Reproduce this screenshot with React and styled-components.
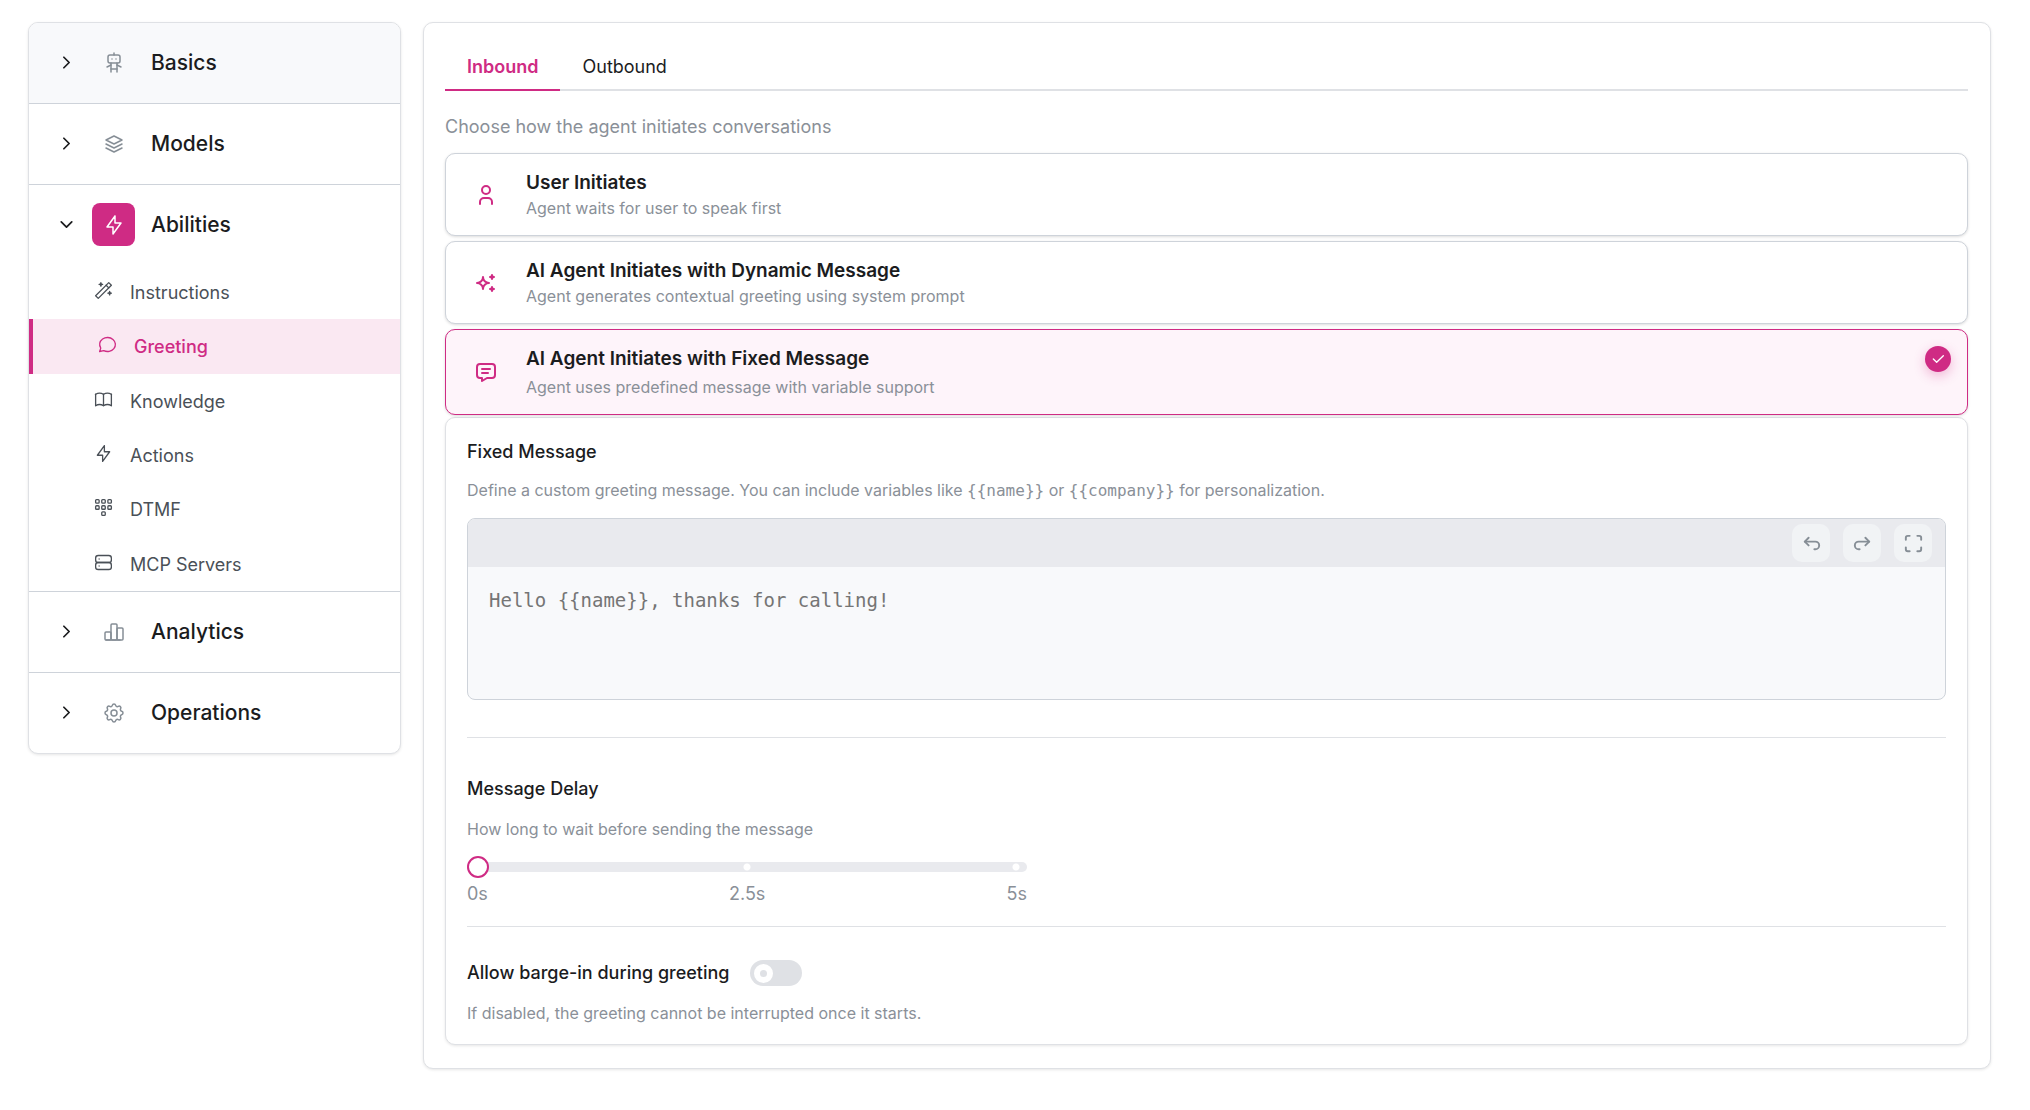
import { useState } from "react";
import styled, { createGlobalStyle, css } from "styled-components";
import {
  TbArrowBackUp,
  TbArrowForwardUp,
  TbBolt,
  TbBook,
  TbChartBar,
  TbCheck,
  TbChevronDown,
  TbChevronRight,
  TbDialpad,
  TbMaximize,
  TbMessage,
  TbMessageCircle,
  TbRobot,
  TbServer,
  TbSettings,
  TbSparkles,
  TbStack2,
  TbUser,
  TbWand,
} from "react-icons/tb";

const GlobalStyle = createGlobalStyle`
  :root {
    --pink: #cf2b84;
    --pink-light: #fae8f2;
    --pink-faint: #fef4fa;
    --text: #1b1c1e;
    --text-soft: #4a5057;
    --text-dim: #8a9098;
    --gray-0: #f8f9fb;
    --gray-1: #f1f3f5;
    --gray-2: #e9eaee;
    --gray-3: #dfe1e5;
    --gray-4: #ced3da;
    --mono: "DejaVu Sans Mono", monospace;
  }

  *, *::before, *::after {
    box-sizing: border-box;
  }

  body {
    margin: 0;
    background: #fff;
    color: var(--text);
    font-family: Inter, "Liberation Sans", sans-serif;
    font-size: 18px;
    -webkit-font-smoothing: antialiased;
  }

  button, input, textarea {
    font: inherit;
    color: inherit;
  }
`;

const Page = styled.div`
  display: flex;
  align-items: flex-start;
  gap: 22px;
  padding: 22px 39px 40px 28px;
`;

const panel = css`
  background: #fff;
  border: 1px solid var(--gray-3);
  border-radius: 10px;
  box-shadow: 0 1px 3px rgba(0, 0, 0, 0.1);
`;

/* ---------- sidebar ---------- */

const Sidebar = styled.nav`
  ${panel}
  flex: 0 0 373px;
  overflow: hidden;
`;

const Section = styled.div`
  & + & {
    border-top: 1px solid var(--gray-4);
  }
`;

const SectionButton = styled.button`
  display: flex;
  align-items: center;
  width: 100%;
  height: 80px;
  padding: 0 27px 1px;
  border: 0;
  background: ${(p) => (p.$hovered ? "var(--gray-0)" : "transparent")};
  font-size: 21px;
  font-weight: 500;
  text-align: left;
  cursor: pointer;
`;

const SectionIcon = styled.span`
  display: grid;
  place-items: center;
  width: 43px;
  height: 43px;
  margin: 0 16px 0 15px;
  border-radius: 8px;
  color: ${(p) => (p.$active ? "#fff" : "#868e96")};
  background: ${(p) => (p.$active ? "var(--pink)" : "transparent")};
`;

const SubList = styled.div`
  display: grid;
  grid-auto-rows: 1fr;
  height: 326px;
`;

const SubLink = styled.a`
  display: flex;
  align-items: center;
  gap: 16px;
  padding: 1px 0 0 64px;
  color: var(--text-soft);
  text-decoration: none;

  svg {
    margin-bottom: 4px;
  }

  ${(p) =>
    p.$active &&
    css`
      border-left: 4px solid var(--pink);
      background: var(--pink-light);
      color: var(--pink);
      font-weight: 500;
    `}
`;

/* ---------- main ---------- */

const Main = styled.main`
  ${panel}
  flex: 1;
  min-width: 0;
  padding: 21px 22px 23px 21px;
`;

const TabList = styled.div`
  display: flex;
  border-bottom: 2px solid var(--gray-3);
`;

const Tab = styled.button`
  height: 47px;
  margin-bottom: -2px;
  padding: 0 22px;
  border: 0;
  border-bottom: 2px solid ${(p) => (p.$active ? "var(--pink)" : "transparent")};
  background: none;
  color: ${(p) => (p.$active ? "var(--pink)" : "inherit")};
  font-weight: ${(p) => (p.$active ? 600 : 400)};
  cursor: pointer;
`;

const Options = styled.fieldset`
  display: flex;
  flex-direction: column;
  gap: 5px;
  margin: 0 0 2px;
  padding: 0;
  border: 0;
`;

const Legend = styled.legend`
  padding: 22px 0 13px;
  line-height: 27px;
  color: var(--text-dim);
`;

const OptionCard = styled.label`
  position: relative;
  display: flex;
  align-items: center;
  gap: 20px;
  padding: 17px 20px 15px;
  border: 1px solid ${(p) => (p.$selected ? "var(--pink)" : "var(--gray-4)")};
  border-radius: 10px;
  background: ${(p) => (p.$selected ? "var(--pink-faint)" : "#fff")};
  box-shadow: 0 1px 3px rgba(0, 0, 0, 0.14);
  cursor: pointer;
`;

const HiddenRadio = styled.input`
  position: absolute;
  opacity: 0;
  pointer-events: none;
`;

const OptionIcon = styled.span`
  display: grid;
  place-items: center;
  width: 40px;
  padding-bottom: 2px;
  color: var(--pink);
`;

const OptionText = styled.span`
  display: flex;
  flex-direction: column;
  gap: ${(p) => (p.$selected ? "5px" : "2px")};
`;

const OptionTitle = styled.span`
  line-height: 24px;
  font-size: 19px;
  font-weight: 600;
`;

const OptionHint = styled.span`
  line-height: 23px;
  font-size: 16px;
  color: var(--text-dim);
`;

const SelectedBadge = styled.span`
  position: absolute;
  top: 16px;
  right: 16px;
  display: grid;
  place-items: center;
  width: 26px;
  height: 26px;
  border-radius: 50%;
  background: var(--pink);
  color: #fff;
  box-shadow: 0 4px 12px rgba(207, 43, 132, 0.3);
`;

const Settings = styled.div`
  ${panel}
  padding: 0 21px;
`;

const Block = styled.section`
  padding: ${(p) => p.$pad};

  & + & {
    border-top: 1px solid var(--gray-3);
  }
`;

const FieldTitle = styled.label`
  display: block;
  line-height: 28px;
  font-weight: 500;
`;

const Hint = styled.p`
  margin: ${(p) => p.$gap || "14px"} 0 0;
  line-height: 24px;
  font-size: 16px;
  color: var(--text-dim);

  code {
    font-family: var(--mono);
    font-size: 16px;
  }
`;

const Editor = styled.div`
  margin-top: 15px;
  border: 1px solid var(--gray-4);
  border-radius: 8px;
  background: var(--gray-0);
  overflow: hidden;
`;

const Toolbar = styled.div`
  display: flex;
  justify-content: flex-end;
  gap: 13px;
  padding: 5px 13px;
  background: var(--gray-2);
`;

const ToolButton = styled.button`
  display: grid;
  place-items: center;
  width: 38px;
  height: 38px;
  padding: 0;
  border: 0;
  border-radius: 10px;
  background: var(--gray-1);
  color: #868e96;
  cursor: pointer;
`;

const MessageInput = styled.textarea`
  display: block;
  width: 100%;
  height: 132px;
  padding: 19px 21px;
  border: 0;
  outline: 0;
  resize: none;
  background: transparent;
  font-family: var(--mono);
  font-size: 19px;
  line-height: 28px;

  &::placeholder {
    color: #757575;
  }
`;

const SliderBox = styled.div`
  max-width: 560px;
  margin-top: 15px;
`;

const Slider = styled.input`
  display: block;
  width: 100%;
  height: 22px;
  margin: 0;
  appearance: none;
  background: none;
  cursor: pointer;

  &::-webkit-slider-runnable-track {
    height: 10px;
    border-radius: 5px;
    background:
      radial-gradient(circle at 50% 50%, #fff 3px, transparent 4px),
      radial-gradient(circle at calc(100% - 11px) 50%, #fff 3px, transparent 4px),
      var(--gray-2);
  }

  &::-webkit-slider-thumb {
    appearance: none;
    width: 22px;
    height: 22px;
    margin-top: -6px;
    border: 2px solid var(--pink);
    border-radius: 50%;
    background: #fff;
  }
`;

const SliderLabels = styled.div`
  display: flex;
  justify-content: space-between;
  margin-top: 3px;
  line-height: 26px;
  color: var(--text-dim);
`;

const SwitchRow = styled.div`
  display: flex;
  align-items: center;
  gap: 20px;
`;

const Switch = styled.input`
  appearance: none;
  display: flex;
  align-items: center;
  width: 52px;
  height: 26px;
  margin: 0;
  padding: 0 4px;
  border-radius: 13px;
  background: ${(p) => (p.checked ? "var(--pink)" : "var(--gray-3)")};
  cursor: pointer;

  &::before {
    content: "";
    width: 19px;
    height: 19px;
    margin-left: ${(p) => (p.checked ? "auto" : 0)};
    border: 6px solid #fff;
    border-radius: 50%;
  }
`;

const sections = [
  { label: "Basics", icon: TbRobot, hovered: true },
  { label: "Models", icon: TbStack2 },
  {
    label: "Abilities",
    icon: TbBolt,
    items: [
      { label: "Instructions", icon: TbWand },
      { label: "Greeting", icon: TbMessageCircle },
      { label: "Knowledge", icon: TbBook },
      { label: "Actions", icon: TbBolt },
      { label: "DTMF", icon: TbDialpad },
      { label: "MCP Servers", icon: TbServer },
    ],
  },
  { label: "Analytics", icon: TbChartBar },
  { label: "Operations", icon: TbSettings },
];

const options = [
  {
    id: "user",
    icon: TbUser,
    title: "User Initiates",
    hint: "Agent waits for user to speak first",
  },
  {
    id: "dynamic",
    icon: TbSparkles,
    title: "AI Agent Initiates with Dynamic Message",
    hint: "Agent generates contextual greeting using system prompt",
  },
  {
    id: "fixed",
    icon: TbMessage,
    title: "AI Agent Initiates with Fixed Message",
    hint: "Agent uses predefined message with variable support",
  },
];

const SideNav = () => (
  <Sidebar>
    {sections.map(({ label, icon: Icon, hovered, items }) => (
      <Section key={label}>
        <SectionButton type="button" $hovered={hovered} aria-expanded={!!items}>
          {items ? <TbChevronDown size={21} /> : <TbChevronRight size={21} />}
          <SectionIcon $active={!!items}>
            <Icon size={24} strokeWidth={1.5} />
          </SectionIcon>
          {label}
        </SectionButton>
        {items && (
          <SubList>
            {items.map(({ label: name, icon: SubIcon }) => (
              <SubLink key={name} href="#" $active={name === "Greeting"}>
                <SubIcon size={21} strokeWidth={1.5} />
                {name}
              </SubLink>
            ))}
          </SubList>
        )}
      </Section>
    ))}
  </Sidebar>
);

const App = () => {
  const [tab, setTab] = useState("Inbound");
  const [mode, setMode] = useState("fixed");
  const [message, setMessage] = useState("");
  const [delay, setDelay] = useState(0);
  const [bargeIn, setBargeIn] = useState(false);

  return (
    <>
      <GlobalStyle />
      <Page>
        <SideNav />
        <Main>
          <TabList role="tablist">
            {["Inbound", "Outbound"].map((name) => (
              <Tab
                key={name}
                type="button"
                role="tab"
                aria-selected={tab === name}
                $active={tab === name}
                onClick={() => setTab(name)}
              >
                {name}
              </Tab>
            ))}
          </TabList>

          <Options>
            <Legend>Choose how the agent initiates conversations</Legend>
            {options.map(({ id, icon: Icon, title, hint }) => (
              <OptionCard key={id} $selected={mode === id}>
                <HiddenRadio
                  type="radio"
                  name="mode"
                  value={id}
                  checked={mode === id}
                  onChange={() => setMode(id)}
                />
                <OptionIcon>
                  <Icon size={24} />
                </OptionIcon>
                <OptionText $selected={mode === id}>
                  <OptionTitle>{title}</OptionTitle>
                  <OptionHint>{hint}</OptionHint>
                </OptionText>
                {mode === id && (
                  <SelectedBadge>
                    <TbCheck size={16} />
                  </SelectedBadge>
                )}
              </OptionCard>
            ))}
          </Options>

          <Settings>
            <Block $pad="20px 0 37px">
              <FieldTitle htmlFor="message">Fixed Message</FieldTitle>
              <Hint $gap="12px">
                Define a custom greeting message. You can include variables like{" "}
                <code>{"{{name}}"}</code> or <code>{"{{company}}"}</code> for
                personalization.
              </Hint>
              <Editor>
                <Toolbar>
                  <ToolButton type="button" aria-label="Undo">
                    <TbArrowBackUp size={23} />
                  </ToolButton>
                  <ToolButton type="button" aria-label="Redo">
                    <TbArrowForwardUp size={23} />
                  </ToolButton>
                  <ToolButton type="button" aria-label="Full screen">
                    <TbMaximize size={23} />
                  </ToolButton>
                </Toolbar>
                <MessageInput
                  id="message"
                  value={message}
                  placeholder="Hello {{name}}, thanks for calling!"
                  onChange={(e) => setMessage(e.target.value)}
                />
              </Editor>
            </Block>

            <Block $pad="37px 0 19px">
              <FieldTitle htmlFor="delay">Message Delay</FieldTitle>
              <Hint>How long to wait before sending the message</Hint>
              <SliderBox>
                <Slider
                  id="delay"
                  type="range"
                  min="0"
                  max="5"
                  step="0.5"
                  value={delay}
                  onChange={(e) => setDelay(Number(e.target.value))}
                />
                <SliderLabels>
                  <span>0s</span>
                  <span>2.5s</span>
                  <span>5s</span>
                </SliderLabels>
              </SliderBox>
            </Block>

            <Block $pad="32px 0 19px">
              <SwitchRow>
                <FieldTitle htmlFor="barge-in">
                  Allow barge-in during greeting
                </FieldTitle>
                <Switch
                  id="barge-in"
                  type="checkbox"
                  role="switch"
                  checked={bargeIn}
                  onChange={(e) => setBargeIn(e.target.checked)}
                />
              </SwitchRow>
              <Hint>
                If disabled, the greeting cannot be interrupted once it starts.
              </Hint>
            </Block>
          </Settings>
        </Main>
      </Page>
    </>
  );
};

export default App;
